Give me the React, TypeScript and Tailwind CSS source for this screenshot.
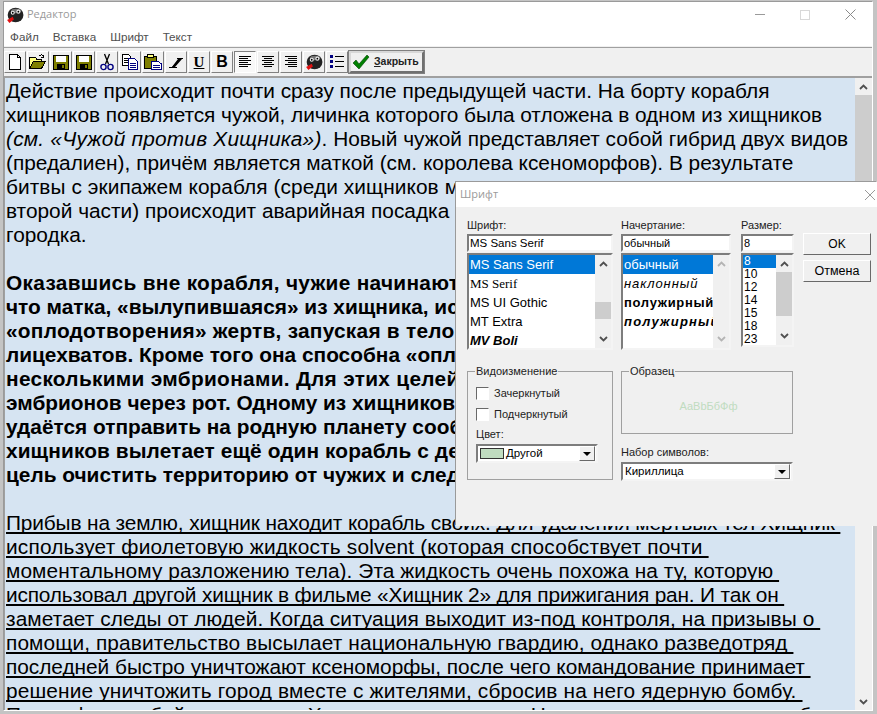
import type { ReactNode } from 'react';

const sunken = 'border-2 border-t-[#7d7d7d] border-l-[#7d7d7d] border-b-[#f4f4f4] border-r-[#f4f4f4]';

const part1 = [
  { text: 'Действие происходит почти сразу после предыдущей части. На борту корабля', cls: '' },
  { text: 'хищников появляется чужой, личинка которого была отложена в одном из хищников', cls: 'tracking-[-0.05px]' },
];
const part1b = [
  { text: '(предалиен), причём является маткой (см. королева ксеноморфов). В результате', cls: '' },
  { text: 'битвы с экипажем корабля (среди хищников можно заметить того, кто выжил после', cls: 'tracking-[0.08px]' },
  { text: 'второй части) происходит аварийная посадка корабля неподалёку от небольшого', cls: '' },
  { text: 'городка.', cls: '' },
];
const part2 = [
  { text: 'Оказавшись вне корабля, чужие начинают охоту на людей. Выясняется,', cls: 'tracking-[0.3px]' },
  { text: 'что матка, «вылупившаяся» из хищника, использует особый способ', cls: '' },
  { text: '«оплодотворения» жертв, запуская в тело эмбрионы без помощи', cls: 'tracking-[0.25px]' },
  { text: 'лицехватов. Кроме того она способна «оплодотворять» жертву', cls: '' },
  { text: 'несколькими эмбрионами. Для этих целей она вводит жертве', cls: 'tracking-[0.3px]' },
  { text: 'эмбрионов через рот. Одному из хищников всё же', cls: '' },
  { text: 'удаётся отправить на родную планету сообщение, и на помощь', cls: '' },
  { text: 'хищников вылетает ещё один корабль с десантником, имеющим', cls: 'tracking-[0.1px]' },
  { text: 'цель очистить территорию от чужих и следов их пребывания.', cls: '' },
];
const part3 = [
  { text: 'Прибыв на землю, хищник находит корабль своих. Для удаления мёртвых тел Хищник ', cls: 'tracking-[-0.14px]' },
  { text: 'использует фиолетовую жидкость solvent (которая способствует почти ', cls: 'tracking-[0.19px]' },
  { text: 'моментальному разложению тела). Эта жидкость очень похожа на ту, которую ', cls: 'tracking-[0.08px]' },
  { text: 'использовал другой хищник в фильме «Хищник 2» для прижигания ран. И так он ', cls: 'tracking-[-0.16px]' },
  { text: 'заметает следы от людей. Когда ситуация выходит из-под контроля, на призывы о ', cls: 'tracking-[0.09px]' },
  { text: 'помощи, правительство высылает национальную гвардию, однако разведотряд ', cls: 'tracking-[0.1px]' },
  { text: 'последней быстро уничтожают ксеноморфы, после чего командование принимает ', cls: 'tracking-[-0.03px]' },
  { text: 'решение уничтожить город вместе с жителями, сбросив на него ядерную бомбу. ', cls: 'tracking-[0.15px]' },
  { text: 'После фиаско бойцов гвардии Хищник атакует матку. Но силы неравны, и в этом бою', cls: '' },
];

function Alien({ size = 16 }: { size?: number }) {
  return (
    <svg width={size} height={size} viewBox="0 0 16 16">
      <ellipse cx="8.5" cy="8" rx="7" ry="6.5" fill="#222" />
      <ellipse cx="9" cy="4.5" rx="4.5" ry="2" fill="#777" />
      <circle cx="6" cy="6" r="1.8" fill="#eee" />
      <circle cx="11" cy="5" r="1.8" fill="#eee" />
      <circle cx="6" cy="6" r="0.8" fill="#000" />
      <circle cx="11" cy="5" r="0.8" fill="#000" />
      <path d="M1 12.5 L6 9.5 L7 12 L3 15 Z" fill="#e01010" />
    </svg>
  );
}

function Glyph({ name }: { name: string }) {
  const navy = '#000080';
  const olive = '#808000';
  if (name === 'new')
    return (
      <svg width="16" height="16" viewBox="0 0 16 16" shapeRendering="crispEdges">
        <path d="M2.5 .5H10.5L13.5 3.5V15.5H2.5Z" fill="#fff" stroke="#000" />
        <path d="M10.5 .5V3.5H13.5" fill="none" stroke="#000" />
      </svg>
    );
  if (name === 'open')
    return (
      <svg width="18" height="16" viewBox="0 0 18 16" shapeRendering="crispEdges">
        <path d="M.5 3.5H6.5L7.5 5H12.5V7.5H4.5L.5 14.5Z" fill="#ffff80" stroke="#000" />
        <path d="M.5 14.5L4.5 7.5H16.5L12.5 14.5Z" fill={olive} stroke="#000" />
        <path d="M9.5 2.5C11 .5 13 .5 14.5 2M14.5 .5V3H12" fill="none" stroke="#000" />
      </svg>
    );
  if (name === 'save')
    return (
      <svg width="16" height="16" viewBox="0 0 16 16" shapeRendering="crispEdges">
        <rect x=".5" y="1.5" width="15" height="14" fill={olive} stroke="#000" />
        <rect x="3" y="2" width="10" height="6" fill="#fff" />
        <rect x="4" y="10" width="8" height="5" fill="#000" />
        <rect x="9" y="11" width="2" height="3" fill={olive} />
      </svg>
    );
  if (name === 'cut')
    return (
      <svg width="14" height="18" viewBox="0 0 14 18">
        <path d="M4.5 1L8.5 11M9.5 1L5.5 11" stroke="#000" strokeWidth="1.3" fill="none" />
        <circle cx="3.5" cy="14" r="2.6" fill="none" stroke={navy} strokeWidth="1.4" />
        <circle cx="10.5" cy="14" r="2.6" fill="none" stroke={navy} strokeWidth="1.4" />
      </svg>
    );
  if (name === 'copy')
    return (
      <svg width="16" height="16" viewBox="0 0 16 16" shapeRendering="crispEdges">
        <path d="M.5 .5H6.5L8.5 2.5V11.5H.5Z" fill="#fff" stroke="#000" />
        <path d="M2 4H7M2 6H7M2 8H7" stroke="#000" />
        <path d="M6.5 4.5H12.5L15.5 7.5V15.5H6.5Z" fill="#fff" stroke={navy} />
        <path d="M8 9H14M8 11H14M8 13H14" stroke={navy} />
      </svg>
    );
  if (name === 'paste')
    return (
      <svg width="18" height="16" viewBox="0 0 18 16" shapeRendering="crispEdges">
        <rect x=".5" y="2.5" width="12" height="12" fill={olive} stroke="#000" />
        <rect x="3.5" y=".5" width="6" height="3" fill="#ffff80" stroke="#000" />
        <path d="M7.5 7.5H14.5L17.5 10V15.5H7.5Z" fill="#fff" stroke={navy} />
        <path d="M9 11H16M9 13H16" stroke={navy} />
      </svg>
    );
  if (name === 'italic')
    return (
      <svg width="14" height="11" viewBox="0 0 14 11">
        <path d="M0 10H3L10 2H8V1H14V2H13L6 10H8V11H0Z" fill="#000" />
        <path d="M3 10L9 2H12L5 10Z" fill="#000" />
      </svg>
    );
  if (name === 'left' || name === 'center' || name === 'right') {
    const rows: [number, number][] =
      name === 'left'
        ? [[1, 12], [1, 9], [1, 12], [1, 9], [1, 12], [1, 9]]
        : name === 'center'
          ? [[1, 12], [3, 8], [1, 12], [3, 8], [1, 12], [3, 8]]
          : [[1, 12], [4, 9], [1, 12], [4, 9], [1, 12], [4, 9]];
    return (
      <svg width="14" height="12" viewBox="0 0 14 12" shapeRendering="crispEdges">
        {rows.map(([x, w], i) => (
          <rect key={i} x={x} y={i * 2} width={w} height="1" fill="#000" />
        ))}
      </svg>
    );
  }
  if (name === 'list')
    return (
      <svg width="16" height="14" viewBox="0 0 16 14" shapeRendering="crispEdges">
        {[0, 5, 10].map((y) => (
          <g key={y}>
            <rect x="1" y={y} width="3" height="3" fill={navy} />
            <rect x="6" y={y + 1} width="9" height="1" fill="#000" />
          </g>
        ))}
      </svg>
    );
  if (name === 'alien') return <Alien size={18} />;
  return null;
}

function ToolButton({ children, pressed }: { children: ReactNode; pressed?: boolean }) {
  return (
    <div
      className={`flex h-[22px] w-[22px] items-center justify-center border ${
        pressed
          ? 'border-t-[#808080] border-l-[#808080] border-b-white border-r-white bg-[#f8f8f8]'
          : 'border-t-white border-l-white border-b-[#808080] border-r-[#808080] bg-[#f0f0f0]'
      }`}
    >
      {children}
    </div>
  );
}

function Chevron({ up, color = '#505050' }: { up?: boolean; color?: string }) {
  return (
    <svg width="9" height="6" viewBox="0 0 9 6" className={up ? '' : 'rotate-180'}>
      <path d="M1 5L4.5 1.5L8 5" fill="none" stroke={color} strokeWidth="1.8" />
    </svg>
  );
}

function Combo({ children, width }: { children: ReactNode; width: string }) {
  return (
    <div className={`flex h-[19px] items-center bg-white ${sunken} ${width}`}>
      <div className="flex min-w-0 flex-1 items-center gap-[2px] pl-[2px] text-[11.5px] text-black">{children}</div>
      <div className="mr-px flex h-[15px] w-[16px] items-center justify-center border border-t-white border-l-white border-b-[#696969] border-r-[#696969] bg-[#f0f0f0]">
        <div className="h-0 w-0 border-x-[4px] border-t-[4px] border-x-transparent border-t-black" />
      </div>
    </div>
  );
}

function Group({ title, children, className }: { title: string; children: ReactNode; className: string }) {
  return (
    <div className={`relative border border-[#a0a0a0] ${className}`}>
      <span className="absolute top-[-7px] left-[7px] bg-[#f0f0f0] px-[1px] text-[11px] leading-[13px] text-[#222]">{title}</span>
      {children}
    </div>
  );
}

function FontDialog() {
  const fonts = [
    { label: 'MS Sans Serif', cls: '' },
    { label: 'MS Serif', cls: 'font-["Liberation_Serif"]' },
    { label: 'MS UI Gothic', cls: '' },
    { label: 'MT Extra', cls: '' },
    { label: 'MV Boli', cls: 'italic font-bold' },
  ];
  const styles = [
    { label: 'обычный', cls: 'text-white' },
    { label: 'наклонный', cls: 'italic tracking-[0.9px]' },
    { label: 'полужирный', cls: 'font-bold tracking-[0.7px]' },
    { label: 'полужирный', cls: 'italic font-bold tracking-[1.2px]' },
  ];
  const sizes = ['8', '10', '12', '14', '15', '18', '23'];

  return (
    <div className="absolute top-[182px] left-[456px] h-[344px] w-[421px] bg-[#f0f0f0] font-['Liberation_Sans',sans-serif] text-[11px] text-[#222] shadow-[-1px_-1px_0_#9a9a9a]">
      <div className="flex h-[25px] items-center justify-between bg-white pr-[1px] pl-[4px]">
        <span className="font-['Open_Sans',sans-serif] text-[11px] text-[#9a9a9a]">Шрифт</span>
        <svg width="12" height="12" viewBox="0 0 12 12">
          <path d="M1 1L11 11M11 1L1 11" stroke="#9a9a9a" />
        </svg>
      </div>

      <div className="flex pt-[11px] pl-[11px]">
        <div className="w-[146px]">
          <div className="h-[15px] leading-[15px]">Шрифт:</div>
          <div className={`mt-[1px] h-[18px] bg-white pl-[1px] text-[11.5px] leading-[14px] text-black ${sunken}`}>MS Sans Serif</div>
          <div className={`mt-[1px] flex h-[97px] bg-white ${sunken}`}>
            <div className="flex-1 text-[13px] text-black">
              {fonts.map((f, i) => (
                <div key={f.label} className={`h-[19px] pl-[1px] leading-[19px] ${i === 0 ? 'bg-[#0078d7] text-white' : ''} ${f.cls}`}>
                  {f.label}
                </div>
              ))}
            </div>
            <div className="relative flex w-[16px] flex-col items-center justify-between bg-[#f0f0f0] py-[6px]">
              <Chevron up />
              <div className="absolute top-[47px] left-0 h-[17px] w-full bg-[#cdcdcd]" />
              <Chevron />
            </div>
          </div>
        </div>

        <div className="ml-[8px] w-[110px]">
          <div className="h-[15px] leading-[15px]">Начертание:</div>
          <div className={`mt-[1px] h-[18px] bg-white pl-[1px] text-[11px] leading-[14px] text-black ${sunken}`}>обычный</div>
          <div className={`mt-[1px] flex h-[97px] bg-white ${sunken}`}>
            <div className="min-w-0 flex-1 overflow-hidden text-[13px] whitespace-nowrap text-black">
              {styles.map((s, i) => (
                <div key={i} className={`h-[19px] pl-[1px] leading-[19px] ${i === 0 ? 'bg-[#0078d7]' : ''} ${s.cls}`}>
                  {s.label}
                </div>
              ))}
            </div>
            <div className="flex w-[16px] shrink-0 flex-col items-center justify-between bg-[#f0f0f0] py-[6px]">
              <Chevron up color="#b4b4b4" />
              <Chevron color="#b4b4b4" />
            </div>
          </div>
        </div>

        <div className="ml-[10px] w-[53px]">
          <div className="h-[15px] leading-[15px]">Размер:</div>
          <div className={`mt-[1px] h-[18px] bg-white pl-[1px] text-[11px] leading-[14px] text-black ${sunken}`}>8</div>
          <div className={`mt-[1px] flex h-[94px] bg-white ${sunken}`}>
            <div className="flex-1 text-[12px] text-black">
              {sizes.map((s, i) => (
                <div key={s} className={`h-[13px] pl-[1px] leading-[13px] ${i === 0 ? 'bg-[#0078d7] text-white' : ''}`}>
                  {s}
                </div>
              ))}
            </div>
            <div className="relative flex w-[16px] flex-col items-center justify-between bg-[#f0f0f0] py-[6px]">
              <Chevron up />
              <div className="absolute top-[17px] left-0 h-[44px] w-full bg-[#cdcdcd]" />
              <Chevron />
            </div>
          </div>
        </div>

        <div className="ml-[9px] flex w-[68px] flex-col gap-[5px] pt-[15px]">
          <div className="flex h-[22px] items-center justify-center border border-t-white border-l-white border-b-[#696969] border-r-[#696969] bg-[#f0f0f0] text-[12px] text-black">OK</div>
          <div className="flex h-[22px] items-center justify-center border border-t-white border-l-white border-b-[#696969] border-r-[#696969] bg-[#f0f0f0] text-[12.5px] text-black">Отмена</div>
        </div>
      </div>

      <div className="mt-[21px] flex pl-[11px]">
        <Group title="Видоизменение" className="h-[109px] w-[146px]">
          <div className="flex flex-col pt-[15px] pl-[8px]">
            <div className="flex h-[13px] items-center gap-[5px]">
              <div className="h-[13px] w-[13px] border border-t-[#696969] border-l-[#696969] border-b-white border-r-white bg-white" />
              <span>Зачеркнутый</span>
            </div>
            <div className="mt-[8px] flex h-[13px] items-center gap-[5px]">
              <div className="h-[13px] w-[13px] border border-t-[#696969] border-l-[#696969] border-b-white border-r-white bg-white" />
              <span>Подчеркнутый</span>
            </div>
            <div className="mt-[6px] h-[14px] text-[11px] leading-[14px]">Цвет:</div>
            <div className="mt-[3px]">
              <Combo width="w-[122px]">
                <div className="h-[11px] w-[24px] shrink-0 border border-[#333] bg-[#c0dcc0]" />
                <span>Другой</span>
              </Combo>
            </div>
          </div>
        </Group>
        <div className="ml-[8px] w-[172px]">
          <Group title="Образец" className="flex h-[63px] items-center justify-center">
            <span className="pt-[7px] pl-[3px] text-[11px] text-[#c0dcc0]">АаBbБбФф</span>
          </Group>
          <div className="mt-[11px] h-[14px] leading-[14px]">Набор символов:</div>
          <div className="mt-[3px]">
            <Combo width="w-[172px]">
              <span>Кириллица</span>
            </Combo>
          </div>
        </div>
      </div>
    </div>
  );
}

export default function App() {
  return (
    <div className="relative h-[714px] w-[877px] overflow-hidden bg-[#c4c4c4] pt-[1px] pr-[4px] pb-[3px] pl-[3px] font-['Liberation_Sans',sans-serif]">
      <div className="flex h-full flex-col border border-t-[#9a9a9a] border-l-[#9a9a9a] border-b-white border-r-white bg-white">
        <div className="flex h-[26px] shrink-0 items-center justify-between pr-[16px] pb-[1px] pl-[2px]">
          <div className="flex items-center gap-[3px]">
            <Alien size={18} />
            <span className="font-['Open_Sans',sans-serif] text-[11px] text-[#9a9a9a]">Редактор</span>
          </div>
          <div className="flex items-center gap-[35px]">
            <div className="h-px w-[10px] bg-[#9a9a9a]" />
            <div className="h-[10px] w-[10px] border border-[#d8d8d8]" />
            <svg width="11" height="11" viewBox="0 0 11 11">
              <path d="M.5 .5L10.5 10.5M10.5 .5L.5 10.5" stroke="#8a8a8a" />
            </svg>
          </div>
        </div>

        <div className="flex h-[18px] shrink-0 items-center gap-[14px] pl-[6px] text-[11.7px] text-[#4f4f4f]">
          <span>Файл</span>
          <span>Вставка</span>
          <span>Шрифт</span>
          <span>Текст</span>
        </div>

        <div className="h-[1px] shrink-0 bg-[#f0f0f0]" />
        <div className="h-[1px] shrink-0 bg-[#a0a0a0]" />

        <div className="flex h-[28px] shrink-0 items-center gap-px bg-[#f0f0f0]">
          <ToolButton><Glyph name="new" /></ToolButton>
          <ToolButton><Glyph name="open" /></ToolButton>
          <ToolButton><Glyph name="save" /></ToolButton>
          <ToolButton><Glyph name="save" /></ToolButton>
          <ToolButton><Glyph name="cut" /></ToolButton>
          <ToolButton><Glyph name="copy" /></ToolButton>
          <ToolButton><Glyph name="paste" /></ToolButton>
          <ToolButton><Glyph name="italic" /></ToolButton>
          <ToolButton>
            <span className="font-['Liberation_Serif',serif] text-[15px] leading-none font-bold text-black underline">U</span>
          </ToolButton>
          <ToolButton>
            <span className="text-[16px] leading-none font-bold text-black">B</span>
          </ToolButton>
          <ToolButton pressed><Glyph name="left" /></ToolButton>
          <ToolButton><Glyph name="center" /></ToolButton>
          <ToolButton><Glyph name="right" /></ToolButton>
          <ToolButton><Glyph name="alien" /></ToolButton>
          <ToolButton><Glyph name="list" /></ToolButton>
          <div className="flex h-[22px] w-[75px] items-center gap-[4px] border-2 border-t-[#d8d8d8] border-l-[#d8d8d8] border-b-[#707070] border-r-[#707070] bg-[#f0f0f0] pl-[1px] outline outline-[#808080]">
            <svg width="18" height="16" viewBox="0 0 18 16">
              <path d="M1 9L4 6L7 10L15 1L17 3L7 15Z" fill="#008000" stroke="#004000" strokeWidth=".6" />
            </svg>
            <span className="text-[10.5px] font-bold text-[#222]"><span className="underline">З</span>акрыть</span>
          </div>
        </div>

        <div className="flex min-h-0 flex-1 border-t-2 border-l border-t-[#a0a0a0] border-l-[#a0a0a0]">
          <div className="min-w-0 flex-1 overflow-hidden bg-[#d6e4f2] pt-px pl-[1px] text-[20.85px] leading-[24px] whitespace-pre text-black">
            {part1.map((line) => (
              <div key={line.text} className={line.cls}>{line.text}</div>
            ))}
            <div>
              <i className="tracking-[0.22px]">(см. «Чужой против Хищника»)</i>. Новый чужой представляет собой гибрид двух видов
            </div>
            {part1b.map((line) => (
              <div key={line.text} className={line.cls}>{line.text}</div>
            ))}
            <div className="h-[24px]" />
            {part2.map((line) => (
              <div key={line.text} className={`font-bold ${line.cls}`}>{line.text}</div>
            ))}
            <div className="h-[24px]" />
            {part3.map((line) => (
              <div key={line.text} className={`underline decoration-2 underline-offset-2 [text-decoration-skip-ink:none] ${line.cls}`}>{line.text}</div>
            ))}
          </div>
          <div className="flex w-[17px] shrink-0 flex-col items-center bg-[#f0f0f0]">
            <div className="flex h-[17px] items-center justify-center"><Chevron up /></div>
            <div className="h-[120px] w-full bg-[#cdcdcd]" />
            <div className="flex-1" />
            <div className="flex h-[17px] items-center justify-center"><Chevron /></div>
          </div>
        </div>
      </div>
      <FontDialog />
    </div>
  );
}
